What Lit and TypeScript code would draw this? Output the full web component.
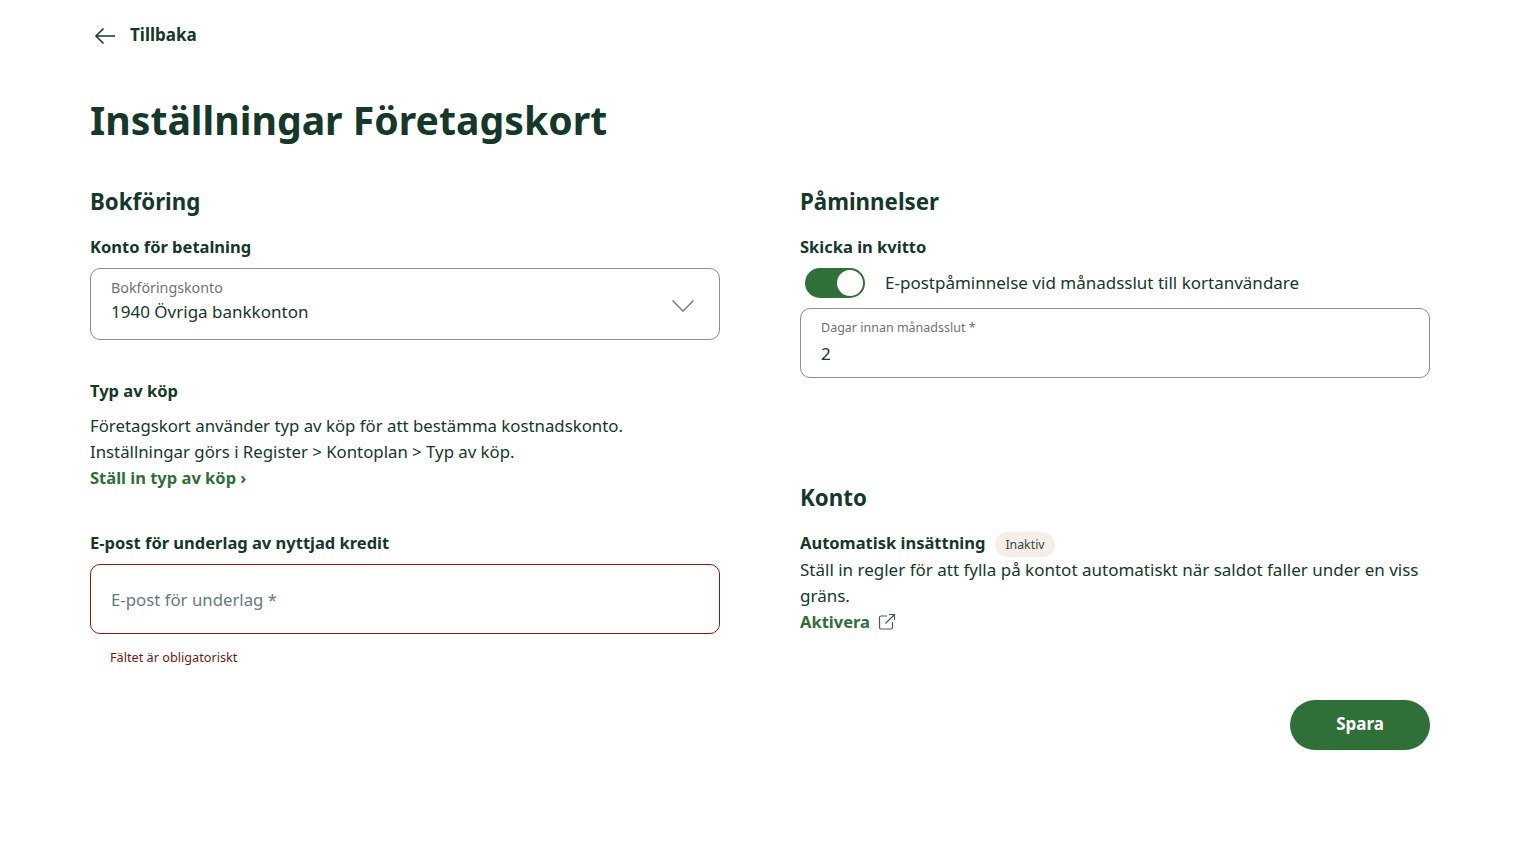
import { LitElement, html, css } from 'lit';
import { customElement } from 'lit/decorators.js';

@customElement('app-root')
export class AppRoot extends LitElement {
  static styles = css`
    :host {
      display: block;
      font-family: 'Noto Sans', 'Open Sans', sans-serif;
      color: #14382a;
      background: #fff;
      min-height: 858px;
    }

    .page {
      padding: 0 86px 0 90px;
    }

    .back {
      display: flex;
      align-items: center;
      gap: 14px;
      height: 68px;
      padding-left: 4px;
      font-size: 17px;
      font-weight: 700;
    }

    .back svg {
      display: block;
      margin-top: 4px;
    }

    h1 {
      margin: 24px 0 0;
      font-size: 39.2px;
      line-height: 56px;
      height: 94px;
      font-weight: 700;
    }

    .columns {
      display: grid;
      grid-template-columns: 630px 630px;
      column-gap: 80px;
    }

    h2 {
      margin: 0;
      font-size: 22.3px;
      line-height: 32px;
      font-weight: 700;
    }

    h3 {
      margin: 0;
      font-size: 16.5px;
      line-height: 24px;
      font-weight: 700;
    }

    p {
      margin: 0;
      font-size: 17px;
      line-height: 26px;
    }

    a {
      color: #2f7038;
      font-weight: 700;
      font-size: 16.5px;
      line-height: 26px;
      text-decoration: none;
    }

    .field {
      box-sizing: border-box;
      border: 1px solid #8c8f8e;
      border-radius: 10px;
      padding: 0 20px;
      position: relative;
    }

    .field .label {
      color: #6f7472;
      font-size: 14.25px;
      line-height: 18px;
    }

    .field .value {
      font-size: 17px;
      line-height: 24px;
    }

    .select {
      height: 72px;
      margin-top: 9px;
      padding-top: 10px;
    }

    .select .value {
      margin-top: 3px;
    }

    .select svg {
      position: absolute;
      right: 24px;
      top: 30px;
    }

    .type {
      margin-top: 39px;
    }

    .type p {
      margin-top: 10px;
      font-size: 16.8px;
    }

    .email {
      margin-top: 40px;
    }

    .error-field {
      display: flex;
      align-items: center;
      height: 70px;
      margin-top: 9px;
      border-color: #8a1a0e;
      color: #667a85;
      font-size: 16.8px;
    }

    .error {
      margin: 14px 0 0 20px;
      font-size: 12.7px;
      line-height: 18px;
      color: #6e1a10;
    }

    .toggle-row {
      display: flex;
      align-items: center;
      gap: 20px;
      height: 30px;
      margin: 9px 0 10px 5px;
    }

    .toggle {
      box-sizing: border-box;
      width: 60px;
      height: 30px;
      border-radius: 15px;
      background: #2f7038;
      display: flex;
      justify-content: flex-end;
      align-items: center;
      padding-right: 2px;
    }

    .knob {
      width: 26px;
      height: 26px;
      border-radius: 50%;
      background: #fff;
    }

    .days {
      height: 70px;
      padding-top: 10px;
    }

    .days .label {
      font-size: 12.5px;
    }

    .days .value {
      margin-top: 5px;
    }

    .account {
      margin-top: 104px;
    }

    .auto {
      display: flex;
      align-items: center;
      gap: 10px;
      margin-top: 15px;
      height: 27px;
    }

    .auto + p {
      margin-top: 1px;
    }

    .badge {
      margin-top: 4px;
      background: #f5efe8;
      border-radius: 13px;
      height: 25px;
      line-height: 25px;
      padding: 0 10px;
      font-size: 12.3px;
      color: #2d4a3d;
    }

    .activate {
      display: flex;
      align-items: center;
      gap: 8px;
    }

    .actions {
      display: flex;
      justify-content: flex-end;
      margin-top: 65px;
    }

    button {
      width: 140px;
      height: 50px;
      border: 0;
      padding: 0 0 4px;
      border-radius: 25px;
      background: #2f7038;
      color: #fff;
      font-family: inherit;
      font-size: 17px;
      font-weight: 700;
    }
  `;

  render() {
    return html`
      <div class="page">
        <div class="back">
          <svg width="22" height="18" viewBox="0 0 22 18" fill="none" stroke="#14382a" stroke-width="1.5">
            <path d="M21 9H2M9.5 1.5 2 9l7.5 7.500" />
          </svg>
          Tillbaka
        </div>
        <h1>Inställningar Företagskort</h1>
        <div class="columns">
          <section>
            <h2>Bokföring</h2>
            <h3 style="margin-top:17px">Konto för betalning</h3>
            <div class="field select">
              <div class="label">Bokföringskonto</div>
              <div class="value">1940 Övriga bankkonton</div>
              <svg width="24" height="14" viewBox="0 0 24 14" fill="none" stroke="#6f7472" stroke-width="1.3">
                <path d="M1.5 1.5 12 12 22.5 1.5" />
              </svg>
            </div>
            <div class="type">
              <h3>Typ av köp</h3>
              <p>
                Företagskort använder typ av köp för att bestämma kostnadskonto.<br />
                Inställningar görs i Register &gt; Kontoplan &gt; Typ av köp.
              </p>
              <a href="#">Ställ in typ av köp ›</a>
            </div>
            <div class="email">
              <h3>E-post för underlag av nyttjad kredit</h3>
              <div class="field error-field">E-post för underlag *</div>
              <div class="error">Fältet är obligatoriskt</div>
            </div>
          </section>
          <section>
            <h2>Påminnelser</h2>
            <h3 style="margin-top:17px">Skicka in kvitto</h3>
            <div class="toggle-row">
              <div class="toggle"><div class="knob"></div></div>
              <p>E-postpåminnelse vid månadsslut till kortanvändare</p>
            </div>
            <div class="field days">
              <div class="label">Dagar innan månadsslut *</div>
              <div class="value">2</div>
            </div>
            <div class="account">
              <h2>Konto</h2>
              <div class="auto">
                <h3>Automatisk insättning</h3>
                <span class="badge">Inaktiv</span>
              </div>
              <p>Ställ in regler för att fylla på kontot automatiskt när saldot faller under en viss gräns.</p>
              <a class="activate" href="#">
                Aktivera
                <svg width="18" height="18" viewBox="0 0 18 18" fill="none" stroke="#4b5a55" stroke-width="1.2">
                  <path d="M9 3H3a1.500 1.500 0 0 0-1.500 1.500v10A1.500 1.500 0 0 0 3 16h10a1.500 1.500 0 0 0 1.500-1.500V9M7.500 10.500 16.500 1.500M11 1.500h5.500V7" />
                </svg>
              </a>
            </div>
            <div class="actions"><button>Spara</button></div>
          </section>
        </div>
      </div>
    `;
  }
}

declare global {
  interface HTMLElementTagNameMap {
    'app-root': AppRoot;
  }
}
